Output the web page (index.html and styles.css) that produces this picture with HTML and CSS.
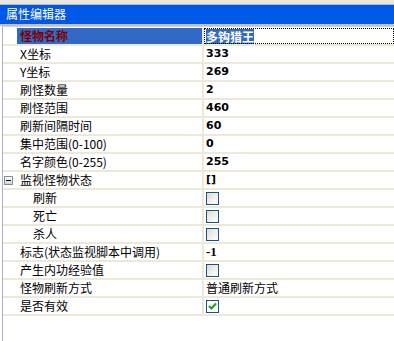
FILE: index.html
```html
<!DOCTYPE html>
<html>
<head>
	<meta http-equiv="Content-Type" content="text/html; charset=UTF-8">
	<title>属性编辑器</title>
	<link rel="stylesheet" href="styles.css">
</head>
<body>

<div class="top"></div>
<div class="caption">属性编辑器</div>

<div class="grid">
	<div class="row">
		<div class="gut"></div>
		<div class="name sel">怪物名称</div>
		<div class="val focus"><span class="hl">多钩猎王</span></div>
	</div>
	<div class="row">
		<div class="gut"></div>
		<div class="name">X坐标</div>
		<div class="val num">333</div>
	</div>
	<div class="row">
		<div class="gut"></div>
		<div class="name">Y坐标</div>
		<div class="val num">269</div>
	</div>
	<div class="row">
		<div class="gut"></div>
		<div class="name">刷怪数量</div>
		<div class="val num">2</div>
	</div>
	<div class="row">
		<div class="gut"></div>
		<div class="name">刷怪范围</div>
		<div class="val num">460</div>
	</div>
	<div class="row">
		<div class="gut"></div>
		<div class="name">刷新间隔时间</div>
		<div class="val num">60</div>
	</div>
	<div class="row">
		<div class="gut"></div>
		<div class="name">集中范围(0-100)</div>
		<div class="val num">0</div>
	</div>
	<div class="row">
		<div class="gut"></div>
		<div class="name">名字颜色(0-255)</div>
		<div class="val num">255</div>
	</div>
	<div class="row">
		<div class="gut"><span class="minus"></span></div>
		<div class="name">监视怪物状态</div>
		<div class="val num">[]</div>
	</div>
	<div class="row">
		<div class="gut"></div>
		<div class="name sub">刷新</div>
		<div class="val"><span class="box"></span></div>
	</div>
	<div class="row">
		<div class="gut"></div>
		<div class="name sub">死亡</div>
		<div class="val"><span class="box"></span></div>
	</div>
	<div class="row">
		<div class="gut"></div>
		<div class="name sub">杀人</div>
		<div class="val"><span class="box"></span></div>
	</div>
	<div class="row">
		<div class="gut"></div>
		<div class="name">标志(状态监视脚本中调用)</div>
		<div class="val num serif">-1</div>
	</div>
	<div class="row">
		<div class="gut"></div>
		<div class="name">产生内功经验值</div>
		<div class="val"><span class="box"></span></div>
	</div>
	<div class="row">
		<div class="gut"></div>
		<div class="name">怪物刷新方式</div>
		<div class="val">普通刷新方式</div>
	</div>
	<div class="row">
		<div class="gut"></div>
		<div class="name">是否有效</div>
		<div class="val"><span class="box checked"><svg width="11" height="11" viewBox="0 0 11 11"><path d="M2 5 L4.5 7.5 L9 2.5" fill="none" stroke="#21a121" stroke-width="2.2"/></svg></span></div>
	</div>
</div>

</body>
</html>
```

FILE: styles.css
```css
html, body { margin: 0; padding: 0; }
body { width: 394px; height: 341px; overflow: hidden; background: #fff; font-family: "Noto Sans CJK SC", "Liberation Sans", sans-serif; font-size: 12px; color: #000; }
.top { height: 4px; background: #ece9d8; border-bottom: 1px solid #a7b8dd; }
.caption { height: 19px; line-height: 18px; background: #0058e6; color: #fff; padding-left: 6px; border-bottom: 2px solid #c0c0c0; }
.grid { margin-left: 2px; border-left: 1px solid #a5b3c8; border-top: 1px solid #d4d0c8; padding-top: 1px; height: 320px; }
.row { display: grid; grid-template-columns: 14px 187px 1fr; height: 16px; border-bottom: 2px solid #ece9d8; }
.gut { display: flex; align-items: center; }
.name { line-height: 16px; padding-left: 3px; white-space: nowrap; overflow: hidden; border-right: 2px solid #ece9d8; }
.name.sel { background: #316ac5; color: #800000; font-weight: bold; }
.name.sub { padding-left: 16px; }
.val { line-height: 16px; padding-left: 2px; white-space: nowrap; display: flex; align-items: center; }
.val.num { font-family: "DejaVu Sans", sans-serif; font-weight: bold; font-size: 11px; }
.val.serif { font-family: "Liberation Serif", serif; font-size: 13px; }
.focus { outline: 1px dotted #000; outline-offset: -1px; }
.hl { background: #316ac5; color: #fff; font-weight: bold; line-height: 15px; }
.minus { width: 7px; height: 7px; border: 1px solid #7a8ea8; margin-left: 1px; background: linear-gradient(#fff, #d8d4c8); position: relative; }
.minus::after { content: ""; position: absolute; left: 1px; right: 1px; top: 3px; height: 1px; background: #000; }
.box { width: 11px; height: 11px; border: 1px solid #1c5180; background: linear-gradient(135deg, #dcdcd7, #fff); display: inline-flex; }
.box.checked { background: #fff; }
```
